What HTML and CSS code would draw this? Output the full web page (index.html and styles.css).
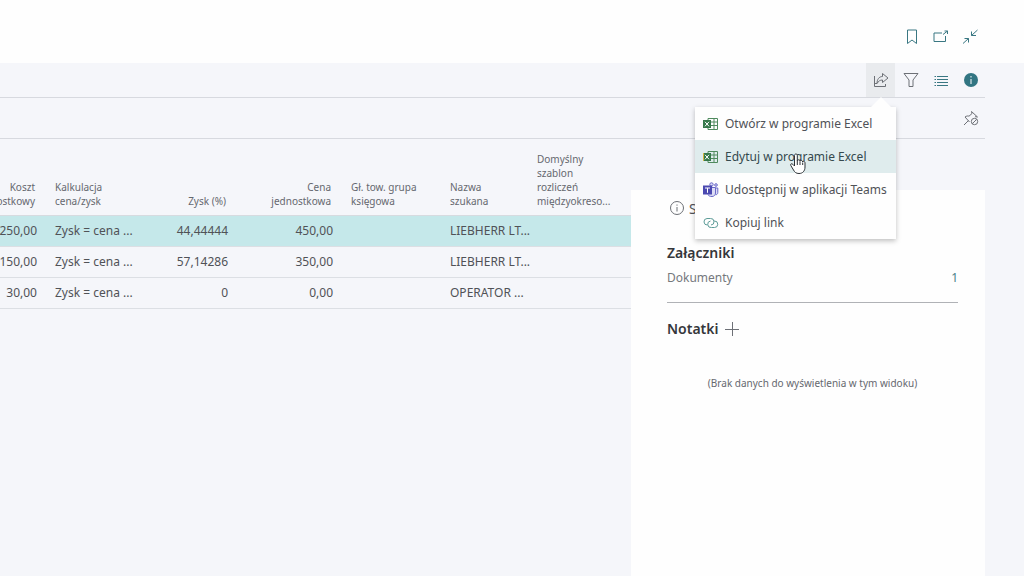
FILE: index.html
```html
<!DOCTYPE html>
<html lang="pl">
<head>
<meta charset="utf-8">
<meta name="viewport" content="width=device-width, initial-scale=1">
<title>Zasoby</title>
<link rel="stylesheet" href="styles.css">
</head>
<body>
<div class="page">
  <header class="topbar">
    <button class="icon-btn" type="button" aria-label="Dodaj zakładkę"><svg width="18" height="18" viewBox="0 0 18 18"><path d="M4.500 2h9v13.500L9 12l-4.500 3.500z"/></svg></button>
    <button class="icon-btn" type="button" aria-label="Otwórz w nowym oknie"><svg width="18" height="18" viewBox="0 0 18 18"><path d="M10 5H2v8.500h11.500V8M11 6.500l4.500-3.500M12.500 3H15.500V6"/></svg></button>
    <button class="icon-btn" type="button" aria-label="Zwiń"><svg width="18" height="18" viewBox="0 0 18 18"><path d="M16.500 2L10.500 7.500M10.500 3.500v4H15M2 15.500l5.500-5M3.500 10.500h4V14.500"/></svg></button>
  </header>

  <main class="content">
    <div class="toolbar">
      <div class="share">
        <button class="icon-btn icon-btn-open" type="button" aria-label="Udostępnij" aria-expanded="true"><svg class="gray" width="18" height="18" viewBox="0 0 18 18"><path d="M2.500 5v10.500h11V13M5 12.500H2.500M10.500 2.500L16 7l-5.500 4.500V9C8 9 6.500 10 5 12.500c0-4 2-7 5.500-7z"/></svg></button>
        <div class="menu" role="menu">
          <button class="menu-item" type="button" role="menuitem"><svg width="16" height="16" viewBox="0 0 16 16"><path class="xl-line" d="M5 2.500h9.500v11H5zM5 6h9.500M5 9.500h9.500M11 2.500v11"/><path class="xl-fill" d="M0 4h8v8H0z"/><path class="mark" d="M2 5.800l4 4.500M6 5.800l-4 4.500"/></svg>Otwórz w programie Excel</button>
          <button class="menu-item menu-item-active" type="button" role="menuitem"><svg width="16" height="16" viewBox="0 0 16 16"><path class="xl-line" d="M5 2.500h9.500v11H5zM5 6h9.500M5 9.500h9.500M11 2.500v11"/><path class="xl-fill" d="M0 4h8v8H0z"/><path class="mark" d="M2 5.800l4 4.500M6 5.800l-4 4.500"/><path class="xl-edge" d="M.5 4v8"/></svg>Edytuj w programie Excel</button>
          <button class="menu-item" type="button" role="menuitem"><svg width="16" height="16" viewBox="0 0 16 16"><g class="tm-line"><circle cx="8.500" cy="2.500" r="1.700"/><circle cx="13" cy="3" r="1.300"/><path d="M8 5.500h4.500v5.500c0 2-1.500 3.500-3.500 3.500S5.500 14 5 12.500M12.500 6h2.300v4.500c0 1.500-1 2.300-2.300 2.300"/></g><path class="tm-fill" d="M0 3.500h9v9H0z"/><path class="mark" d="M2 6h5M4.500 6v4.800"/></svg>Udostępnij w aplikacji Teams</button>
          <button class="menu-item" type="button" role="menuitem"><svg width="16" height="16" viewBox="0 0 16 16"><path class="link-line" d="M4.500 10a3.200 3.200 0 0 1-.5-6.500h3.500A3.200 3.200 0 0 1 8 10M10.500 6H11.500a3.200 3.200 0 0 1 0 6.500H8.500A3.200 3.200 0 0 1 7.500 6"/></svg>Kopiuj link</button>
          <svg class="pointer" width="18" height="24" viewBox="0 0 18 24" aria-hidden="true"><path d="M5.500 14V3.500c0-2 2.800-2 2.800 0V9c0-1.600 2.600-1.600 2.700.2C11.200 8 13.500 8 13.700 10c.3-1.200 2.300-.9 2.300.9V15c0 4-2.300 6.500-6 6.500-3 0-4.300-1.300-5.500-3.500L1.800 13.500c-.8-1.500 1-2.400 2-1.200z"/><path d="M8.300 9v4M11 9.500V13M13.700 10.500V13"/></svg>
        </div>
      </div>
      <button class="icon-btn" type="button" aria-label="Filtr"><svg class="gray" width="18" height="18" viewBox="0 0 18 18"><path d="M2 2.500h14L11 9v6.500H7V9z"/></svg></button>
      <button class="icon-btn" type="button" aria-label="Lista"><svg width="18" height="18" viewBox="0 0 18 18"><path d="M5 5.500h11M5 8.500h11M5 11.500h11M5 14.500h11M2.500 5.500h1.500M2.500 8.500h1.500M2.500 11.500h1.500M2.500 14.500h1.500"/></svg></button>
      <button class="icon-btn" type="button" aria-label="Informacje"><svg width="18" height="18" viewBox="0 0 18 18"><circle class="info-disc" cx="9" cy="9" r="7"/><path class="info-mark" d="M9 8v5M9 5v1.500"/></svg></button>
    </div>
    <div class="pinbar">
      <button class="icon-btn" type="button" aria-label="Odepnij"><svg class="gray" width="18" height="18" viewBox="0 0 18 18"><path d="M2 16l4.500-4.500M3 8l4.500 5M3 8c1.500-1.200 3-1.200 4-.8L10 4.500 9.500 2.500 15.500 8l-2.500-.3"/><circle cx="12.500" cy="12.500" r="3.200"/><path d="M10.300 14.700l4.400-4.400"/></svg></button>
    </div>

    <div class="columns">
      <section class="list">
        <table class="grid">
          <colgroup><col class="w-cost"><col class="w-calc"><col class="w-profit"><col class="w-price"><col class="w-group"><col class="w-name"><col></colgroup>
          <thead>
            <tr>
              <th class="num"><div class="clip">Koszt<br>jednostkowy</div></th>
              <th>Kalkulacja<br>cena/zysk</th>
              <th class="num">Zysk (%)</th>
              <th class="num">Cena<br>jednostkowa</th>
              <th>Gł. tow. grupa<br>księgowa</th>
              <th>Nazwa<br>szukana</th>
              <th>Domyślny<br>szablon<br>rozliczeń<br>międzyokreso...</th>
            </tr>
          </thead>
          <tbody>
            <tr class="selected"><td class="num"><div class="clip">250,00</div></td><td>Zysk = cena ...</td><td class="num">44,44444</td><td class="num">450,00</td><td></td><td>LIEBHERR LT...</td><td></td></tr>
            <tr><td class="num"><div class="clip">150,00</div></td><td>Zysk = cena ...</td><td class="num">57,14286</td><td class="num">350,00</td><td></td><td>LIEBHERR LT...</td><td></td></tr>
            <tr><td class="num"><div class="clip">30,00</div></td><td>Zysk = cena ...</td><td class="num">0</td><td class="num">0,00</td><td></td><td>OPERATOR ...</td><td></td></tr>
          </tbody>
        </table>
      </section>

      <aside class="factbox">
        <button class="tab" type="button"><svg class="gray" width="16" height="16" viewBox="0 0 16 16"><circle cx="8" cy="8" r="6.500"/><path d="M8 7v4.500M8 4.500v1.200"/></svg>Szczegóły</button>
        <h2 class="title">Załączniki</h2>
        <div class="fact"><span>Dokumenty</span><a class="count" href="#dokumenty">1</a></div>
        <div class="notes">
          <h2 class="title">Notatki</h2>
          <button class="add" type="button" aria-label="Dodaj notatkę"><svg class="gray" width="16" height="16" viewBox="0 0 16 16"><path d="M8.500 1v14M1 8.500h14"/></svg></button>
        </div>
        <p class="empty">(Brak danych do wyświetlenia w tym widoku)</p>
      </aside>
    </div>
  </main>
</div>
</body>
</html>
```
FILE: styles.css
```css
* { box-sizing: border-box; }
body {
  margin: 0;
  background: #f5f6fa;
  color: #505257;
  font-family: "Noto Sans", "Open Sans", sans-serif;
  font-size: 12px;
}
.page { display: flex; flex-direction: column; min-height: 100vh; overflow: hidden; }
button { margin: 0; padding: 0; border: 0; background: none; color: inherit; font: inherit; }
svg { flex: none; fill: none; stroke: #397782; stroke-width: 1; }
svg.gray { stroke: #6d7076; }

.topbar {
  display: flex;
  align-items: center;
  justify-content: flex-end;
  height: 63px;
  padding: 10px 40px 0 0;
  background: #fefefe;
}
.icon-btn { display: flex; align-items: center; justify-content: center; width: 29px; height: 34px; }
.icon-btn-open { background: #e9ebee; }

.content { display: flex; flex: 1; flex-direction: column; margin-right: 39px; }
.toolbar { display: flex; gap: 1px; justify-content: flex-end; height: 35px; border-bottom: 1px solid #d7d9df; }
.pinbar { display: flex; align-items: center; justify-content: flex-end; height: 41px; border-bottom: 1px solid #d7d9df; }

.share { position: relative; }
.menu {
  position: absolute;
  z-index: 2;
  top: 44px;
  right: -1px;
  width: 201px;
  background: #fefefe;
  box-shadow: 0 2px 5px rgba(0, 0, 0, 0.25);
}
.menu::before {
  content: "";
  position: absolute;
  right: 5px;
  bottom: 100%;
  border: 10px solid transparent;
  border-top: 0;
  border-bottom-color: #fefefe;
}
.menu-item { display: flex; align-items: center; gap: 6px; width: 100%; height: 33px; padding: 0 8px; white-space: nowrap; }
.menu-item-active { background: #dfeced; color: #35494d; }
.xl-line { stroke: #4f8a5e; }
.xl-fill { fill: #35784a; stroke: none; }
.xl-edge { stroke: #d3b544; }
.mark { stroke: #fff; }
.tm-line { fill: #dcdcf5; stroke: #6a69c9; }
.tm-fill { fill: #4b49b0; stroke: none; }
.link-line { stroke: #5d9c98; }
.pointer { position: absolute; top: 45px; left: 94px; fill: #fff; stroke: #2e3338; pointer-events: none; }
.info-disc { fill: #327582; stroke: none; }
.info-mark { stroke: #fff; }

.columns { display: flex; flex: 1; }
.list { flex: 1; min-width: 0; }
.grid { width: 100%; border-collapse: collapse; table-layout: fixed; }
.w-cost { width: 46px; }
.w-calc { width: 99px; }
.w-profit { width: 92px; }
.w-price { width: 105px; }
.w-group { width: 99px; }
.w-name { width: 87px; }
th {
  height: 76px;
  padding: 0 9px 7px;
  border-bottom: 1px solid #d7dbe0;
  color: #65686f;
  font-size: 10px;
  font-weight: 400;
  line-height: 14px;
  text-align: left;
  vertical-align: bottom;
  white-space: nowrap;
}
td { height: 31px; padding: 0 9px; border-bottom: 1px solid #dcdfe4; white-space: nowrap; }
.num { text-align: right; }
th.num { padding-right: 11px; }
.clip { display: flex; justify-content: flex-end; }
.selected { background: #c5e8ea; }

.factbox { width: 354px; margin-top: 51px; padding: 9px 27px 0 36px; background: #fefefe; }
.tab { display: flex; align-items: center; gap: 4px; height: 18px; padding-left: 2px; font-size: 14px; }
.title { margin: 0; color: #35373b; font-size: 14px; font-weight: 600; line-height: 20px; }
.factbox > .title { margin-top: 26px; }
.fact {
  display: flex;
  justify-content: space-between;
  height: 40px;
  padding-top: 6px;
  border-bottom: 1px solid #b0b2b6;
  color: #75787d;
}
.count { color: #4a7f88; text-decoration: none; }
.notes { display: flex; align-items: center; gap: 5px; margin-top: 16px; }
.add { display: flex; }
.empty { margin: 36px 0 0; color: #65686f; font-size: 10px; line-height: 16px; text-align: center; }
```
